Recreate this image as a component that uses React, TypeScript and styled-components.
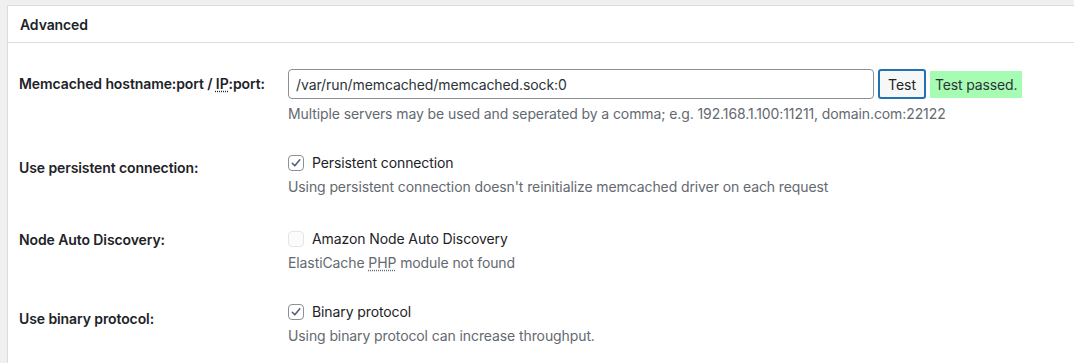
import styled, { createGlobalStyle } from 'styled-components';

const GlobalStyle = createGlobalStyle`
  html, body {
    margin: 0;
    padding: 0;
    background: #f0f0f1;
    overflow: hidden;
  }
  body {
    font-family: Inter, "Noto Sans", sans-serif;
    font-size: 14px;
    color: #3c434a;
  }
`;

const Page = styled.div`
  padding: 5px 0 0 7px;
  height: 363px;
  box-sizing: border-box;
  overflow: hidden;
`;

const Panel = styled.div`
  width: 1100px;
  height: 358px;
  background: #fff;
  border: 1px solid #dcdcde;
  border-bottom: none;
  box-sizing: border-box;
`;

const PanelHeader = styled.h2`
  margin: 0;
  height: 36px;
  padding: 0 12px;
  display: flex;
  align-items: center;
  font-size: 14px;
  font-weight: 600;
  color: #1d2327;
  border-bottom: 1px solid #dcdcde;
  letter-spacing: -0.1px;
`;

const Form = styled.div`
  padding-top: 12px;
`;

const Row = styled.div`
  display: grid;
  grid-template-columns: 270px 1fr;
`;

const Label = styled.div`
  padding: 20px 0 0 11px;
  font-weight: 600;
  color: #1d2327;
  line-height: 18px;
  letter-spacing: -0.1px;
`;

const Field = styled.div<{ $top: number; $bottom: number }>`
  padding: ${(p) => p.$top}px 10px ${(p) => p.$bottom}px 10px;
`;

const Inline = styled.div`
  display: flex;
  align-items: center;
  gap: 4px;
`;

const TextInput = styled.input`
  width: 586px;
  height: 30px;
  box-sizing: border-box;
  border: 1px solid #8c8f94;
  border-radius: 4px;
  padding: 0 7px;
  font-family: inherit;
  font-size: 14px;
  color: #2c3338;
  letter-spacing: -0.1px;
  outline: none;
`;

const Button = styled.button`
  height: 30px;
  width: 48px;
  box-sizing: border-box;
  border: 2px solid #2271b1;
  border-radius: 3px;
  background: #f6f7f7;
  color: #1d2327;
  font-family: inherit;
  font-size: 14px;
  padding: 0;
`;

const Status = styled.span`
  background: #a7fcb4;
  height: 27px;
  line-height: 27px;
  padding: 0 5px;
  color: #2c3338;
  letter-spacing: -0.15px;
`;

const Description = styled.p`
  margin: 6px 0 0;
  line-height: 18px;
  color: #646970;
  letter-spacing: -0.1px;
`;

const CheckLine = styled.label`
  display: flex;
  align-items: center;
  gap: 8px;
  line-height: 18px;
  color: #1d2327;
  letter-spacing: -0.1px;
`;

const Box = styled.span<{ $disabled?: boolean }>`
  width: 16px;
  height: 16px;
  box-sizing: border-box;
  border: 1px solid ${(p) => (p.$disabled ? '#e4e5e7' : '#8c8f94')};
  border-radius: 4px;
  background: ${(p) => (p.$disabled ? '#fcfcfc' : '#fff')};
  display: flex;
  align-items: center;
  justify-content: center;
`;

const Abbr = styled.abbr`
  text-decoration: underline dotted;
  text-underline-offset: 2px;
`;

function Checkbox({ checked, disabled }: { checked?: boolean; disabled?: boolean }) {
  return (
    <Box $disabled={disabled}>
      {checked && (
        <svg width="12" height="12" viewBox="0 0 12 12">
          <path d="M2.3 6.3 L4.8 8.8 L9.8 2.8" fill="none" stroke="#50627a" strokeWidth="1.6" strokeLinecap="round" strokeLinejoin="round" />
        </svg>
      )}
    </Box>
  );
}

export default function App() {
  return (
    <Page>
      <GlobalStyle />
      <Panel>
        <PanelHeader>Advanced</PanelHeader>
        <Form>
          <Row>
            <Label>
              Memcached hostname:port / <Abbr title="Internet Protocol">IP</Abbr>:port:
            </Label>
            <Field $top={14} $bottom={16}>
              <Inline>
                <TextInput defaultValue="/var/run/memcached/memcached.sock:0" />
                <Button>Test</Button>
                <Status>Test passed.</Status>
              </Inline>
              <Description>
                Multiple servers may be used and seperated by a comma; e.g. 192.168.1.100:11211, domain.com:22122
              </Description>
            </Field>
          </Row>
          <Row>
            <Label>Use persistent connection:</Label>
            <Field $top={15} $bottom={15}>
              <CheckLine>
                <Checkbox checked />
                Persistent connection
              </CheckLine>
              <Description>Using persistent connection doesn't reinitialize memcached driver on each request</Description>
            </Field>
          </Row>
          <Row>
            <Label>Node Auto Discovery:</Label>
            <Field $top={19} $bottom={18}>
              <CheckLine>
                <Checkbox disabled />
                Amazon Node Auto Discovery
              </CheckLine>
              <Description>
                ElastiCache <Abbr title="PHP: Hypertext Preprocessor">PHP</Abbr> module not found
              </Description>
            </Field>
          </Row>
          <Row>
            <Label>Use binary protocol:</Label>
            <Field $top={13} $bottom={15}>
              <CheckLine>
                <Checkbox checked />
                Binary protocol
              </CheckLine>
              <Description>Using binary protocol can increase throughput.</Description>
            </Field>
          </Row>
        </Form>
      </Panel>
    </Page>
  );
}
